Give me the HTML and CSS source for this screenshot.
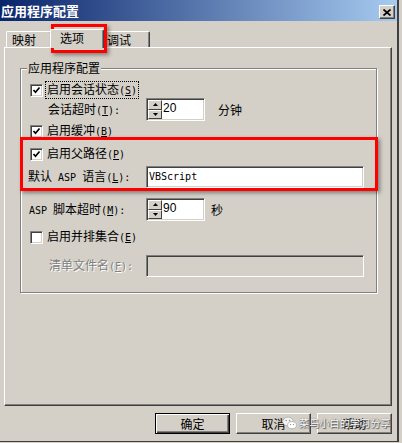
FILE: index.html
```html
<!DOCTYPE html>
<html lang="zh-CN">
<head>
    <meta charset="UTF-8">
    <title>应用程序配置</title>
    <link rel="stylesheet" href="styles.css">
</head>
<body>
    <div class="win">
        <div class="titlebar">
            <span class="title">应用程序配置</span>
            <span class="close">
                <svg width="8" height="7" viewBox="0 0 8 7"><path d="M0.5 0.5 L7.5 6.5 M7.5 0.5 L0.5 6.5" stroke="#000" stroke-width="1.7"/></svg>
            </span>
        </div>

        <div class="tabs">
            <div class="tab first">映射</div>
            <div class="tab active">选项</div>
            <div class="tab last">调试</div>
        </div>

        <div class="panel">
            <div class="group">
                <div class="group-title">应用程序配置</div>

                <div class="row r1">
                    <span class="check"><svg width="9" height="9" viewBox="0 0 9 9"><path d="M1.5 4 L3.5 6.2 L7.5 1.5" fill="none" stroke="#000" stroke-width="1.7"/></svg></span>
                    <span class="focus">启用会话状态<span class="lat">(<u>S</u>)</span></span>
                </div>
                <div class="row r2">
                    <span class="lbl ind">会话超时<span class="lat">(<u>T</u>):</span></span>
                    <div class="spin">
                        <div class="spin-btns">
                            <span class="sb"><svg width="5" height="3" viewBox="0 0 5 3"><path d="M0 3 L2.5 0 L5 3Z" fill="#000"/></svg></span>
                            <span class="sb"><svg width="5" height="3" viewBox="0 0 5 3"><path d="M0 0 L2.5 3 L5 0Z" fill="#000"/></svg></span>
                        </div>
                        <span class="val">20</span>
                    </div>
                    <span class="unit min">分钟</span>
                </div>
                <div class="row r3">
                    <span class="check"><svg width="9" height="9" viewBox="0 0 9 9"><path d="M1.5 4 L3.5 6.2 L7.5 1.5" fill="none" stroke="#000" stroke-width="1.7"/></svg></span>
                    <span class="cl">启用缓冲<span class="lat">(<u>B</u>)</span></span>
                </div>
                <div class="row r4">
                    <span class="check"><svg width="9" height="9" viewBox="0 0 9 9"><path d="M1.5 4 L3.5 6.2 L7.5 1.5" fill="none" stroke="#000" stroke-width="1.7"/></svg></span>
                    <span class="cl">启用父路径<span class="lat">(<u>P</u>)</span></span>
                </div>
                <div class="row r5">
                    <span class="lbl lang">默认<span class="lat"> ASP </span>语言<span class="lat">(<u>L</u>):</span></span>
                    <div class="inp"><span class="lat">VBScript</span></div>
                </div>
                <div class="row r6">
                    <span class="lbl asp"><span class="lat">ASP </span>脚本超时<span class="lat">(<u>M</u>):</span></span>
                    <div class="spin">
                        <div class="spin-btns">
                            <span class="sb"><svg width="5" height="3" viewBox="0 0 5 3"><path d="M0 3 L2.5 0 L5 3Z" fill="#000"/></svg></span>
                            <span class="sb"><svg width="5" height="3" viewBox="0 0 5 3"><path d="M0 0 L2.5 3 L5 0Z" fill="#000"/></svg></span>
                        </div>
                        <span class="val">90</span>
                    </div>
                    <span class="unit sec">秒</span>
                </div>
                <div class="row r7">
                    <span class="check"></span>
                    <span class="cl">启用并排集合<span class="lat">(<u>E</u>)</span></span>
                </div>
                <div class="row r8">
                    <span class="lbl ind2 off">清单文件名<span class="lat">(<u>F</u>):</span></span>
                    <div class="inp off-inp"></div>
                </div>
            </div>
        </div>

        <div class="buttons">
            <span class="btn default">确定</span>
            <span class="btn">取消</span>
            <span class="btn">帮助</span>
        </div>

        <!-- red annotation frames -->
        <div class="mark mark-tab"></div>
        <div class="mark mark-path"></div>

        <div class="watermark">
            <svg width="15" height="14" viewBox="0 0 15 14">
                <ellipse cx="6" cy="5.5" rx="5.3" ry="4.4" fill="#f4f4f4" stroke="#aaa" stroke-width="0.8"/>
                <ellipse cx="10" cy="9.2" rx="4.4" ry="3.6" fill="#fff" stroke="#aaa" stroke-width="0.8"/>
                <circle cx="4.2" cy="4.5" r="0.7" fill="#888"/>
                <circle cx="7.6" cy="4.5" r="0.7" fill="#888"/>
                <circle cx="8.6" cy="8.6" r="0.6" fill="#888"/>
                <circle cx="11.4" cy="8.6" r="0.6" fill="#888"/>
            </svg>
            <span class="wm-text">菜鸟小白的学习分享</span>
        </div>
    </div>
</body>
</html>
```

FILE: styles.css
```css
body {
    margin: 0;
    background: #d4d0c8;
    font: 12px/14px "Noto Sans CJK SC", sans-serif;
    color: #000;
}
.win {
    position: relative;
    width: 397px;
    height: 441px;
    border-right: 2px solid #404040;
    border-bottom: 1px solid #404040;
    background: #d4d0c8;
}
.titlebar {
    height: 21px;
    display: flex;
    justify-content: space-between;
    align-items: flex-start;
    background: linear-gradient(to right, #0a246a, #a6caf0);
}
.title {
    color: #fff;
    font-weight: bold;
    font-size: 13px;
    line-height: 21px;
    padding-left: 1px;
}
.close {
    display: flex;
    align-items: center;
    justify-content: center;
    width: 16px;
    height: 14px;
    box-sizing: border-box;
    margin: 5px 2px 0 0;
    background: #d4d0c8;
    border: 1px solid;
    border-color: #fff #404040 #404040 #fff;
    box-shadow: inset -1px -1px #808080;
}

/* tabs */
.tabs {
    display: flex;
    align-items: flex-end;
    height: 18px;
    margin-top: 8px;
    padding-left: 6px;
}
.tab {
    height: 16px;
    box-sizing: border-box;
    border: 1px solid #fff;
    border-bottom: 0;
    border-right-color: #404040;
    border-radius: 2px 2px 0 0;
    box-shadow: inset -1px 0 #808080;
    line-height: 15px;
}
.tab.first {
    width: 46px;
    padding-left: 5px;
}
.tab.active {
    position: relative;
    z-index: 1;
    width: 54px;
    height: 19px;
    margin: 0 0 -1px -2px;
    padding-left: 9px;
    background: #d4d0c8;
    line-height: 16px;
}
.tab.last {
    width: 48px;
    margin-left: -2px;
    padding-left: 4px;
}
.panel {
    width: 388px;
    height: 359px;
    box-sizing: border-box;
    margin-left: 4px;
    border: 1px solid #fff;
    border-right-color: #404040;
    border-bottom-color: #404040;
    box-shadow: inset -1px -1px #808080;
    padding: 20px 0 0 15px;
}

/* group box */
.group {
    width: 357px;
    height: 225px;
    box-sizing: border-box;
    border: 1px solid #808080;
    box-shadow: inset 1px 1px #fff, 1px 1px #fff;
}
.group-title {
    width: max-content;
    margin: -8px 0 0 6px;
    padding: 0 1px;
    background: #d4d0c8;
}
.row {
    display: flex;
    align-items: center;
    padding-left: 9px;
}
.r1 { height: 16px; margin-top: 7px; }
.r2 { height: 23px; }
.r3 { height: 16px; margin-top: 2px; }
.r4 { height: 16px; margin-top: 7px; }
.r5 { height: 22px; margin-top: 4px; }
.r6 { height: 23px; margin-top: 10px; }
.r7 { height: 16px; margin-top: 8px; }
.r8 { height: 22px; margin-top: 10px; }

.lat {
    font-family: "DejaVu Sans Mono", monospace;
    font-size: 10px;
}
.check {
    display: flex;
    align-items: center;
    justify-content: center;
    width: 13px;
    height: 13px;
    box-sizing: border-box;
    background: #fff;
    border: 1px solid;
    border-color: #808080 #fff #fff #808080;
    box-shadow: inset 1px 1px #404040, inset -1px -1px #d4d0c8;
}
.cl {
    margin-left: 4px;
}
.focus {
    margin-left: 2px;
    padding: 0 1px;
    border: 1px dotted #000;
}
.lbl {
    width: 116px;
    box-sizing: border-box;
}
.lbl.ind { padding-left: 18px; }
.lbl.ind2 { padding-left: 19px; }
.lbl.lang { width: 118px; margin-left: -2px; }
.lbl.asp { width: 117px; margin-left: -1px; }
.off {
    color: #808080;
    text-shadow: 1px 1px #fff;
}

.spin, .inp {
    box-sizing: border-box;
    background: #fff;
    border: 1px solid;
    border-color: #808080 #fff #fff #808080;
    box-shadow: inset 1px 1px #404040, inset -1px -1px #d4d0c8;
}
.spin {
    display: flex;
    width: 59px;
    height: 23px;
    padding: 1px;
}
.spin-btns {
    display: flex;
    flex-direction: column;
    width: 14px;
}
.sb {
    flex: 1;
    display: flex;
    align-items: center;
    justify-content: center;
    background: #d4d0c8;
    border: 1px solid;
    border-color: #fff #404040 #404040 #fff;
}
.val {
    font-family: "Liberation Sans", sans-serif;
    padding-left: 1px;
    line-height: 16px;
}
.unit.min { margin-left: 13px; }
.unit.sec { margin-left: 6px; }
.inp {
    display: flex;
    align-items: center;
    width: 218px;
    height: 22px;
    padding-left: 2px;
}
.off-inp {
    background: #d4d0c8;
}

/* dialog buttons */
.buttons {
    display: flex;
    justify-content: flex-end;
    gap: 6px;
    margin-top: 7px;
    padding-right: 5px;
}
.btn {
    width: 75px;
    height: 21px;
    box-sizing: border-box;
    text-align: center;
    line-height: 19px;
    border: 1px solid;
    border-color: #fff #404040 #404040 #fff;
    box-shadow: inset -1px -1px #808080;
}
.btn.default {
    border-color: #000;
    box-shadow: inset 1px 1px #fff, inset -1px -1px #404040, inset -2px -2px #808080;
}

/* overlays */
.mark {
    position: absolute;
    border: 3px solid #ff0000;
    box-shadow: 2px 2px 4px rgba(0, 0, 0, 0.4);
}
.mark-tab {
    left: 51px;
    top: 24px;
    width: 50px;
    height: 23px;
}
.mark-path {
    left: 20px;
    top: 137px;
    width: 352px;
    height: 48px;
}
.watermark {
    position: absolute;
    left: 282px;
    top: 415px;
    display: flex;
    align-items: center;
    gap: 2px;
}
.wm-text {
    color: #fff;
    font-size: 10px;
    letter-spacing: 0.2px;
    line-height: 16px;
    text-shadow: 0 0 1px #444, 1px 1px 1px #555;
}
```
